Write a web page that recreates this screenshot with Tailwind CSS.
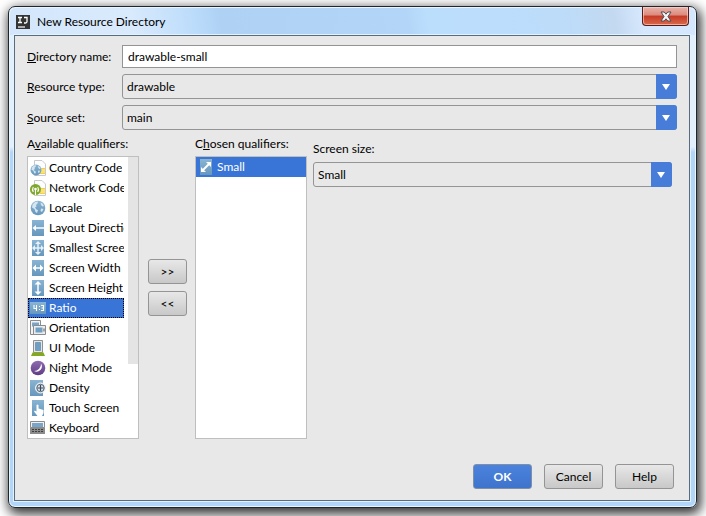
<!DOCTYPE html>
<html lang="en">
<head>
<meta charset="utf-8">
<meta name="viewport" content="width=device-width, initial-scale=1">
<title>New Resource Directory</title>
<script src="https://cdn.jsdelivr.net/npm/@tailwindcss/browser@4"></script>
</head>
<body class="flex min-h-screen bg-white pt-[6px] pr-[9px] pb-[8px] pl-[8px] font-[Lato,'Open_Sans',sans-serif] text-[12px] leading-4 text-black overflow-hidden">
<svg class="absolute size-0" aria-hidden="true">
  <defs>
    <linearGradient id="blue" x1="0" y1="0" x2="0" y2="1"><stop offset="0" stop-color="#8ab4d2"/><stop offset="1" stop-color="#6697bd"/></linearGradient>
    <linearGradient id="purple" x1="0" y1="0" x2="0" y2="1"><stop offset="0" stop-color="#8f6bb0"/><stop offset="1" stop-color="#5f3d85"/></linearGradient>
    <symbol id="sheet" viewBox="0 0 16 16"><path d="M4.500.5h7.500l3.500 3.500v11.500h-11z" fill="#fdfdfd" stroke="#c9c9c9"/><path d="M10 8h5v6h-5z" fill="#f5cf3c"/><path d="M10 10h5M10 12h5" stroke="#fff3b8"/></symbol>
    <symbol id="globe" viewBox="0 0 16 16"><circle cx="8" cy="8" r="7.300" fill="url(#blue)"/><path d="M2.500 4.500 5 2l3-.5-.5 2L6 5l.5 1.500L5 7.500 6.500 9.500l1.500.5-1 3L5.500 12 4.500 9 2 7.500zM10.500 2.500l2 1L14 6l-1.500.500L11 5zM11 8.500l2.500.5-1.500 3-1.500-1z" fill="#d6e6f1"/></symbol>
  </defs>
</svg>
<section role="dialog" aria-labelledby="dlg-title" class="flex min-w-0 flex-1 flex-col rounded-[7px] border border-[#20262c] bg-linear-to-b from-[#e2effc] from-28% to-[#b2d6f8] to-29% pl-[5px] pr-[6px] pb-[6px] shadow-[inset_0_0_0_1px_#eaf6ff,2px_4px_12px_2px_rgba(0,0,0,0.8)]">
  <header class="-ml-[4px] -mr-[5px] mt-px flex h-[27px] shrink-0 items-start justify-between rounded-t-[6px] bg-[linear-gradient(80deg,#d3e6fb_0%,#d9eafc_18%,#bcdcfb_27%,#aed1f4_31%,#b3d6f8_58%,#bcdefd_61%,#bcdcfa_80%,#c3d9f0_88%,#d5e7fd_92%)] pl-[6px] pr-[6px]">
    <div class="flex h-[27px] items-center gap-[7px]">
      <svg class="size-[14px]" viewBox="0 0 14 14" aria-hidden="true"><path fill="#343434" d="M0 0h14v14H0z"/><path d="M2 2.500h4M4 2.500v5M2 7.500h4M8 2.500h3v4q0 1.500-1.500 1.500H8" fill="none" stroke="#fff" stroke-width="1.300"/><path d="M2 12h7" stroke="#fff" stroke-width="1.200"/></svg>
      <h1 id="dlg-title" class="whitespace-nowrap">New Resource Directory</h1>
    </div>
    <button type="button" aria-label="Close" class="-mt-px flex h-[19px] w-[47px] items-center justify-center rounded-b-[4px] border border-t-0 border-[#5b1c19] bg-[linear-gradient(180deg,#e9b3aa_0%,#dc8a7c_45%,#c53a26_50%,#d9694b_100%)] shadow-[inset_0_0_0_1px_rgba(255,220,210,0.6)]">
      <svg class="h-[11px] w-[12px]" viewBox="0 0 12 11" aria-hidden="true"><path d="M1 1h3.200L6 3.200 7.800 1H11L8 5.500l3 4.500H7.800L6 7.800 4.200 10H1l3-4.500z" fill="#f4f4f4" stroke="#4c4b5b" stroke-width="1"/></svg>
    </button>
  </header>

  <form class="flex flex-1 flex-col border border-[#5a6b7e] bg-[#e8e8e8] pb-[11px] pl-[12px] pt-[9px] shadow-[0_0_0_1px_#e3f2ff]">
    <div class="mr-[12px] grid grid-cols-[95px_1fr] items-center gap-y-[6px]">
      <label for="dir-name"><u>D</u>irectory name:</label>
      <input id="dir-name" type="text" value="drawable-small" class="h-[23px] w-full min-w-0 border border-[#949494] bg-white px-[5px] outline-none">

      <label for="res-type"><u>R</u>esource type:</label>
      <div class="relative">
        <select id="res-type" class="block h-[25px] w-full appearance-none rounded-[3px] border border-[#949494] bg-[#e8e8e8] pl-[4px] pr-[24px] outline-none"><option>drawable</option></select>
        <svg class="pointer-events-none absolute right-0 top-0 h-[25px] w-[21px] rounded-r-[3px] bg-[#477dd8]" viewBox="0 0 21 25" aria-hidden="true"><path d="M6 10h8l-4 6z" fill="#fff"/></svg>
      </div>

      <label for="src-set"><u>S</u>ource set:</label>
      <div class="relative">
        <select id="src-set" class="block h-[25px] w-full appearance-none rounded-[3px] border border-[#949494] bg-[#e8e8e8] pl-[4px] pr-[24px] outline-none"><option>main</option></select>
        <svg class="pointer-events-none absolute right-0 top-0 h-[25px] w-[21px] rounded-r-[3px] bg-[#477dd8]" viewBox="0 0 21 25" aria-hidden="true"><path d="M6 10h8l-4 6z" fill="#fff"/></svg>
      </div>
    </div>

    <div class="mr-[17px] mt-[6px] flex flex-1">
      <div class="flex w-[112px] shrink-0 flex-col">
        <h2 id="available" class="mb-[4px] whitespace-nowrap">A<u>v</u>ailable qualifiers:</h2>
        <div class="flex flex-1 border border-[#bfbfbf] bg-white">
          <ul role="listbox" aria-labelledby="available" class="mr-[4px] min-w-0 flex-1 pt-px">
            <li role="option" class="flex h-[20px] items-center gap-[3px] pl-[2px]">
              <svg class="size-[16px] shrink-0" viewBox="0 0 16 16" aria-hidden="true"><use href="#sheet"/><use href="#globe" x="0" y="4" width="12" height="12"/></svg>
              <span class="overflow-hidden whitespace-nowrap">Country Code</span></li>
            <li role="option" class="flex h-[20px] items-center gap-[3px] pl-[2px]">
              <svg class="size-[16px] shrink-0" viewBox="0 0 16 16" aria-hidden="true"><use href="#sheet"/><circle cx="5.500" cy="9.500" r="5.500" fill="#7fa82b"/><path d="M3.300 7q-1.600 2.500 0 5M7.700 7q1.600 2.500 0 5M5.500 9.500V15" fill="none" stroke="#fff" stroke-width="1.100"/><circle cx="5.500" cy="9" r="1.300" fill="#fff"/></svg>
              <span class="overflow-hidden whitespace-nowrap">Network Code</span></li>
            <li role="option" class="flex h-[20px] items-center gap-[3px] pl-[2px]">
              <svg class="size-[16px] shrink-0" viewBox="0 0 16 16" aria-hidden="true"><use href="#globe"/></svg>
              <span class="overflow-hidden whitespace-nowrap">Locale</span></li>
            <li role="option" class="flex h-[20px] items-center gap-[3px] pl-[2px]">
              <svg class="size-[16px] shrink-0" viewBox="0 0 16 16" aria-hidden="true"><path d="M2 0h12v16H2z" fill="url(#blue)"/><path d="M5 8h9" stroke="#fff" stroke-width="1.500"/><path d="M2.500 8 6 5v6z" fill="#fff"/></svg>
              <span class="overflow-hidden whitespace-nowrap">Layout Direction</span></li>
            <li role="option" class="flex h-[20px] items-center gap-[3px] pl-[2px]">
              <svg class="size-[16px] shrink-0" viewBox="0 0 16 16" aria-hidden="true"><path d="M2 0h12v16H2z" fill="url(#blue)"/><path d="M8 3v10M4 8h8" stroke="#e6f0f8" stroke-width="1.500"/><path d="M8 1l3 3H5zM8 15l3-3H5zM2 8l3-3v6zM14 8l-3-3v6z" fill="#e6f0f8"/></svg>
              <span class="overflow-hidden whitespace-nowrap">Smallest Screen Width</span></li>
            <li role="option" class="flex h-[20px] items-center gap-[3px] pl-[2px]">
              <svg class="size-[16px] shrink-0" viewBox="0 0 16 16" aria-hidden="true"><path d="M2 0h12v16H2z" fill="url(#blue)"/><path d="M4 8h8" stroke="#fff" stroke-width="1.500"/><path d="M2.500 8 6 4.500v7zM13.500 8 10 4.500v7z" fill="#fff"/></svg>
              <span class="overflow-hidden whitespace-nowrap">Screen Width</span></li>
            <li role="option" class="flex h-[20px] items-center gap-[3px] pl-[2px]">
              <svg class="size-[16px] shrink-0" viewBox="0 0 16 16" aria-hidden="true"><path d="M2 0h12v16H2z" fill="url(#blue)"/><path d="M8 4v8" stroke="#fff" stroke-width="1.500"/><path d="M8 1l3.500 3.500h-7zM8 15l3.500-3.500h-7z" fill="#fff"/></svg>
              <span class="overflow-hidden whitespace-nowrap">Screen Height</span></li>
            <li role="option" aria-selected="true" class="flex h-[20px] items-center gap-[3px] bg-[#3875d6] pl-[2px] text-white outline-1 -outline-offset-1 outline-dotted outline-black">
              <svg class="size-[16px] shrink-0" viewBox="0 0 16 16" aria-hidden="true"><path d="M0 2h16v12H0z" fill="url(#blue)"/><path d="M4 5v3.500h3M6.500 5v6M9 6.500h1M9 9.500h1M11 5.500h2.500v5H11M11.500 8h2" fill="none" stroke="#fff" stroke-width="1.100"/></svg>
              <span class="overflow-hidden whitespace-nowrap">Ratio</span></li>
            <li role="option" class="flex h-[20px] items-center gap-[3px] pl-[2px]">
              <svg class="size-[16px] shrink-0" viewBox="0 0 16 16" aria-hidden="true"><path d="M.5.500h10v14H.5z" fill="#f4f4f4" stroke="#8b8b8b"/><path d="M2 2.500h7v4H2z" fill="#79a6c8"/><path d="M3.500 5.500h12v9h-12z" fill="#ededed" stroke="#8b8b8b"/><path d="M5.500 7.500h7v5h-7z" fill="#6e9fc4"/><path d="M14 8.500v3" stroke="#555"/></svg>
              <span class="overflow-hidden whitespace-nowrap">Orientation</span></li>
            <li role="option" class="flex h-[20px] items-center gap-[3px] pl-[2px]">
              <svg class="size-[16px] shrink-0" viewBox="0 0 16 16" aria-hidden="true"><path d="M3.500.500h9v12h-9z" fill="#e6e6e6" stroke="#909090"/><path d="M5.500 2.500h5v8h-5z" fill="#6e9fc4" stroke="#557f9f" stroke-width=".6"/><path d="M2.500 12.500h11L15 16H1z" fill="#85a91e"/></svg>
              <span class="overflow-hidden whitespace-nowrap">UI Mode</span></li>
            <li role="option" class="flex h-[20px] items-center gap-[3px] pl-[2px]">
              <svg class="size-[16px] shrink-0" viewBox="0 0 16 16" aria-hidden="true"><circle cx="8" cy="8" r="7.300" fill="url(#purple)"/><path d="M11 3.500A5.300 5.300 0 0 1 4 11a7 7 0 0 0 7-7.500z" fill="#fff"/></svg>
              <span class="overflow-hidden whitespace-nowrap">Night Mode</span></li>
            <li role="option" class="flex h-[20px] items-center gap-[3px] pl-[2px]">
              <svg class="size-[16px] shrink-0" viewBox="0 0 16 16" aria-hidden="true"><path d="M0 0h13v16H0z" fill="url(#blue)"/><circle cx="10.500" cy="8" r="5" fill="#d9e0e6" stroke="#f2f2f2"/><circle cx="10.500" cy="8" r="3.700" fill="#dfe5ea" stroke="#4e6070"/><path d="M10.500 5v6M7.500 8h6" stroke="#394b5c" stroke-width="1.200"/></svg>
              <span class="overflow-hidden whitespace-nowrap">Density</span></li>
            <li role="option" class="flex h-[20px] items-center gap-[3px] pl-[2px]">
              <svg class="size-[16px] shrink-0" viewBox="0 0 16 16" aria-hidden="true"><path d="M2 0h12v16H2z" fill="url(#blue)"/><path d="M6.500 5q1-1 2 0v3.500l5 1.500v3L12 16H7.500L4 11.500l.8-1 1.700 1z" fill="#fff"/></svg>
              <span class="overflow-hidden whitespace-nowrap">Touch Screen</span></li>
            <li role="option" class="flex h-[20px] items-center gap-[3px] pl-[2px]">
              <svg class="size-[16px] shrink-0" viewBox="0 0 16 16" aria-hidden="true"><path d="M.5 1.500h14v6H.5z" fill="#f0f0f0" stroke="#8b8b8b"/><path d="M2 3h11v4H2z" fill="#79a6c8"/><path d="M0 7.500h15V14H0z" fill="#8b8b8b"/><path d="M2 9.500h11M2 11.500h2m1 0h5m1 0h2" stroke="#3e3e3e" stroke-dasharray="2 1"/></svg>
              <span class="overflow-hidden whitespace-nowrap">Keyboard</span></li>
          </ul>
          <div class="w-[10px] shrink-0" aria-hidden="true"><div class="h-[207px] bg-[#e4e4e4]"></div></div>
        </div>
      </div>

      <div class="ml-[9px] mr-[8px] mt-[123px] flex w-[39px] shrink-0 flex-col gap-[7px]">
        <button type="button" aria-label="Add qualifier" class="h-[25px] rounded-[3px] border border-[#949494] bg-linear-to-b from-[#e8e8e8] to-[#c8c8c8]">&gt;&gt;</button>
        <button type="button" aria-label="Remove qualifier" class="h-[25px] rounded-[3px] border border-[#949494] bg-linear-to-b from-[#e8e8e8] to-[#c8c8c8]">&lt;&lt;</button>
      </div>

      <div class="flex w-[112px] shrink-0 flex-col">
        <h2 id="chosen" class="mb-[4px] whitespace-nowrap">C<u>h</u>osen qualifiers:</h2>
        <ul role="listbox" aria-labelledby="chosen" class="flex-1 border border-[#bfbfbf] bg-white">
          <li role="option" aria-selected="true" class="flex h-[20px] items-center gap-[3px] bg-[#3875d6] pl-[2px] text-white">
            <svg class="size-[16px] shrink-0" viewBox="0 0 16 16" aria-hidden="true"><path d="M2 0h12v16H2z" fill="url(#blue)"/><path d="M5 11l6-6" stroke="#fff" stroke-width="2"/><path d="M13 3v5L8 3zM3 13V8l5 5z" fill="#fff"/></svg>
            <span>Small</span></li>
        </ul>
      </div>

      <div class="ml-[6px] mt-[5px] flex min-w-0 flex-1 flex-col gap-[5px]">
        <label for="size">Screen size:</label>
        <div class="relative">
          <select id="size" class="block h-[25px] w-full appearance-none rounded-[3px] border border-[#949494] bg-[#e8e8e8] pl-[4px] pr-[24px] outline-none"><option>Small</option></select>
          <svg class="pointer-events-none absolute right-0 top-0 h-[25px] w-[21px] rounded-r-[3px] bg-[#477dd8]" viewBox="0 0 21 25" aria-hidden="true"><path d="M6 10h8l-4 6z" fill="#fff"/></svg>
        </div>
      </div>
    </div>

    <footer class="mr-[15px] mt-[25px] flex justify-end gap-[12px]">
      <button type="submit" class="h-[25px] w-[59px] rounded-[3px] border border-[#7f8fa8] bg-linear-to-b from-[#4a82dd] to-[#3f74cc] font-bold text-white">OK</button>
      <button type="button" class="h-[25px] w-[59px] rounded-[3px] border border-[#949494] bg-linear-to-b from-[#e8e8e8] to-[#c8c8c8]">Cancel</button>
      <button type="button" class="h-[25px] w-[59px] rounded-[3px] border border-[#949494] bg-linear-to-b from-[#e8e8e8] to-[#c8c8c8]">Help</button>
    </footer>
  </form>
</section>
</body>
</html>
